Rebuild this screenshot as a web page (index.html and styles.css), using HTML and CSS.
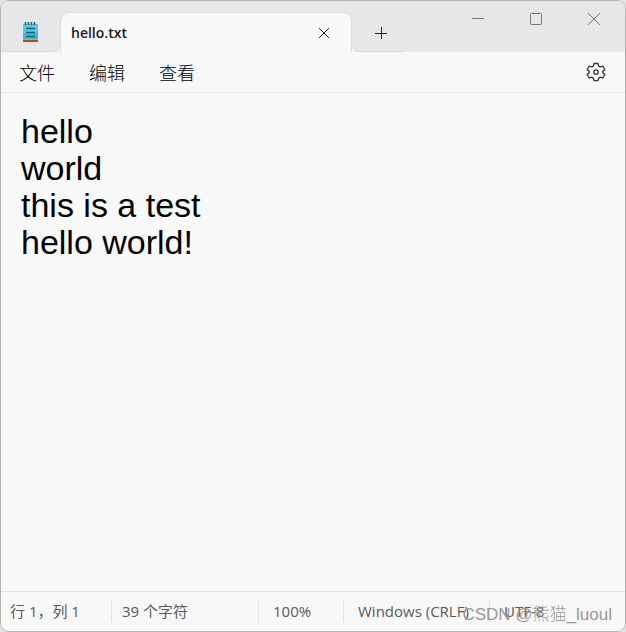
FILE: index.html
```html
<!DOCTYPE html>
<html lang="zh-CN">
<head>
    <meta charset="UTF-8">
    <meta name="viewport" content="width=device-width, initial-scale=1.0">
    <title>hello.txt</title>
    <link rel="stylesheet" href="styles.css">
</head>
<body>
    <div class="window">
        <header class="titlebar">
            <div class="app-icon">
                <svg width="18" height="22" viewBox="0 0 18 22">
                    <rect x="1" y="18" width="15" height="2" fill="#a9511f"/>
                    <rect x="1" y="2" width="15" height="16" fill="#5cc8e2"/>
                    <rect x="1" y="11" width="15" height="6" fill="#43b4d6"/>
                    <path d="M3.500 0v3M6.500 0v3M9.500 0v3M12.500 0v3" stroke="#285766" stroke-width="1.500"/>
                    <path d="M4 6.500h9M4 10.500h9M4 14.500h9" stroke="#14607f" stroke-width="1.500"/>
                </svg>
            </div>
            <div class="tab">
                <span class="tab-title">hello.txt</span>
                <button class="icon-btn" aria-label="关闭标签页">
                    <svg width="12" height="12" viewBox="0 0 12 12"><path d="M1 1l10 10M11 1L1 11" stroke="#222" fill="none"/></svg>
                </button>
            </div>
            <div class="new-tab">
                <button class="icon-btn" aria-label="新建标签页">
                    <svg width="12" height="12" viewBox="0 0 12 12"><path d="M6.500 0v12M0 6.500h12" stroke="#222" fill="none"/></svg>
                </button>
            </div>
            <div class="window-controls">
                <button class="icon-btn" aria-label="最小化">
                    <svg width="12" height="12" viewBox="0 0 12 12"><path d="M0 5.500h12" stroke="#777" fill="none"/></svg>
                </button>
                <button class="icon-btn" aria-label="最大化">
                    <svg width="12" height="12" viewBox="0 0 12 12"><rect x="0.500" y="0.500" width="11" height="11" rx="1" stroke="#777" fill="none"/></svg>
                </button>
                <button class="icon-btn" aria-label="关闭">
                    <svg width="12" height="12" viewBox="0 0 12 12"><path d="M0 0l12 12M12 0L0 12" stroke="#777" fill="none"/></svg>
                </button>
            </div>
        </header>
        <nav class="menubar">
            <button class="menu-item">文件</button>
            <button class="menu-item">编辑</button>
            <button class="menu-item">查看</button>
            <button class="icon-btn settings" aria-label="设置">
                <svg width="20" height="20" viewBox="0 0 20 20" fill="none" stroke="#333" stroke-width="1.300" stroke-linejoin="round">
                    <path d="M8 1.500h4l.7 2.600 1.500.9 2.600-.8 2 3.500-2 1.800v1.200l2 1.800-2 3.500-2.600-.8-1.500.9-.7 2.600H8l-.7-2.600-1.500-.9-2.600.8-2-3.500 2-1.800V9.500l-2-1.800 2-3.500 2.600.8 1.500-.9z"/>
                    <circle cx="10" cy="10" r="2.200"/>
                </svg>
            </button>
        </nav>
        <textarea class="editor" aria-label="文本编辑器" spellcheck="false">hello
world
this is a test
hello world!</textarea>
        <footer class="statusbar">
            <span class="status">行 1，列 1</span>
            <span class="status">39 个字符</span>
            <span class="status">100%</span>
            <span class="status">Windows (CRLF)</span>
            <span class="status">UTF-8</span>
        </footer>
        <div class="watermark">CSDN @熊猫_luoul</div>
    </div>
</body>
</html>
```
FILE: styles.css
```css
* {
    box-sizing: border-box;
}
body {
    margin: 0;
    background: #e4e4e4;
    color: #1b1b1b;
    font-family: "Open Sans", "Noto Sans CJK SC", sans-serif;
}
button {
    border: 0;
    padding: 0;
    background: none;
    color: inherit;
    font: inherit;
}
.window {
    position: relative;
    display: flex;
    flex-direction: column;
    height: 100vh;
    overflow: hidden;
    background: #f9f9f9;
    border: 1px solid #b4b4b4;
    border-radius: 9px;
}
.titlebar {
    display: flex;
    height: 51px;
    background: linear-gradient(#e7e7e7 30px, #f9f9f9 30px);
}
.app-icon {
    width: 59px;
    padding: 21px 0 0 21px;
    background: #e7e7e7;
    border-bottom: 1px solid #dcdcdc;
    border-bottom-right-radius: 6px;
}
.tab {
    display: flex;
    align-items: center;
    justify-content: space-between;
    width: 292px;
    margin-top: 11px;
    padding: 0 17px 0 10px;
    background: #f9f9f9;
    border: 1px solid #dcdcdc;
    border-bottom: 0;
    border-radius: 9px 9px 0 0;
}
.tab-title {
    font-size: 14px;
    font-weight: 600;
}
.icon-btn {
    display: flex;
    align-items: center;
    justify-content: center;
    width: 20px;
    height: 20px;
}
.new-tab {
    width: 50px;
    padding: 22px 0 0 19px;
    background: #e7e7e7;
    border-bottom: 1px solid #d4d4d4;
    border-bottom-left-radius: 6px;
}
.window-controls {
    display: flex;
    flex: 1;
    justify-content: flex-end;
    gap: 38px;
    padding: 8px 21px 0 0;
    background: #e7e7e7;
}
.menubar {
    display: flex;
    align-items: center;
    gap: 34px;
    height: 41px;
    padding: 0 19px 0 18px;
    background: #f8f8f8;
    border-bottom: 1px solid #e8e8e8;
}
.menu-item {
    color: #000;
    font-size: 18px;
    line-height: 24px;
    font-family: "Noto Sans CJK SC", sans-serif;
    font-weight: 300;
}
.settings {
    margin-left: auto;
}
.editor {
    flex: 1;
    padding: 20px;
    border: 0;
    outline: 0;
    resize: none;
    background: #f9f9f9;
    color: #000;
    font-family: "Liberation Sans", Arial, sans-serif;
    font-size: 34px;
    line-height: 37px;
}
.statusbar {
    display: grid;
    grid-template-columns: 110px 147px 85px 146px 1fr;
    align-items: center;
    height: 40px;
    padding-bottom: 2px;
    background: #f8f8f8;
    border-top: 1px solid #e3e3e3;
    color: #5a5a5a;
    font-size: 15px;
    line-height: 22px;
    white-space: nowrap;
}
.status {
    padding-left: 14px;
    border-left: 1px solid #e3e3e3;
}
.status:first-child {
    padding-left: 9px;
    border-left: 0;
}
.status:nth-child(2) {
    padding-left: 10px;
}
.watermark {
    position: absolute;
    right: 13px;
    bottom: 3px;
    color: #999;
    font-family: "Liberation Sans", "Noto Sans CJK SC", sans-serif;
    font-size: 17px;
    font-weight: 300;
    line-height: 26px;
}
```
